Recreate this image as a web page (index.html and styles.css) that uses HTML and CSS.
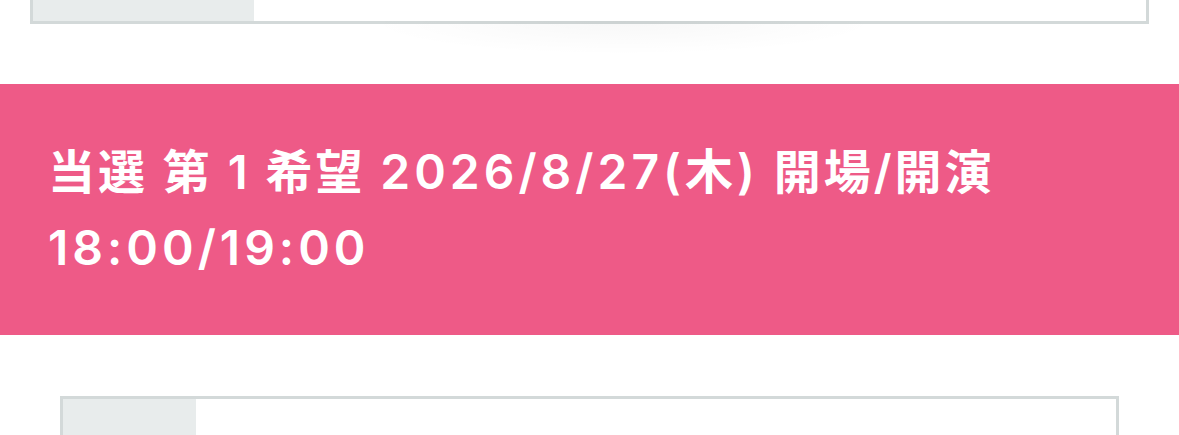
FILE: index.html
```html
<!DOCTYPE html>
<html lang="ja">
<head>
  <meta charset="UTF-8">
  <meta name="viewport" content="width=device-width, initial-scale=1.0">
  <title>当選 第 1 希望</title>
  <link rel="stylesheet" href="styles.css">
</head>
<body>
  <div class="ticket-page">
    <!-- previous entry (scrolled up) -->
    <div class="info-table info-table-prev">
      <div class="info-label"></div>
      <div class="info-value"></div>
    </div>

    <section class="result-banner">
      <h2 class="result-title">当選 第 1 希望 <span class="num">2026/8/27(木)</span> 開場/開演 <span class="num">18:00/19:00</span></h2>
    </section>

    <div class="info-table info-table-next">
      <div class="info-label"></div>
      <div class="info-value"></div>
    </div>
  </div>
</body>
</html>
```

FILE: styles.css
```css
:root {
  --banner-bg: #ee5a87;
  --banner-text: #ffffff;
  --table-border: #d3d9d9;
  --label-bg: #e8ecec;
  --page-bg: #ffffff;
}

body {
  margin: 0;
  padding: 0;
  background: var(--page-bg);
  font-family: Inter, "Noto Sans CJK JP", sans-serif;
  overflow: hidden;
}

.ticket-page {
  display: flex;
  flex-direction: column;
}

/* Info tables */
.info-table {
  display: flex;
  border: 3px solid var(--table-border);
  background: var(--page-bg);
  position: relative;
}

.info-label {
  background: var(--label-bg);
}

.info-value {
  flex: 1;
}

.info-table-prev {
  margin: -40px 30px 0;
  height: 58px;
}

.info-table-prev .info-label {
  width: 221px;
}

/* soft shade left under the card */
.info-table-prev::after {
  content: "";
  position: absolute;
  left: 330px;
  top: 100%;
  width: 520px;
  height: 34px;
  background: radial-gradient(ellipse at 50% 0%, rgba(0,0,0,0.03), rgba(0,0,0,0) 70%);
  pointer-events: none;
}

.info-table-next {
  margin: 61px 60px 0;
  height: 60px;
}

.info-table-next .info-label {
  width: 133px;
}

/* Lottery result banner */
.result-banner {
  margin-top: 60px;
  background: var(--banner-bg);
  padding: 50px 48px 49px;
}

.result-title {
  margin: 0;
  color: var(--banner-text);
  font-size: 47px;
  font-weight: 600;
  line-height: 76px;
  letter-spacing: 3px;
}

.result-title .num {
  font-size: 48px;
  letter-spacing: 4px;
}
```
